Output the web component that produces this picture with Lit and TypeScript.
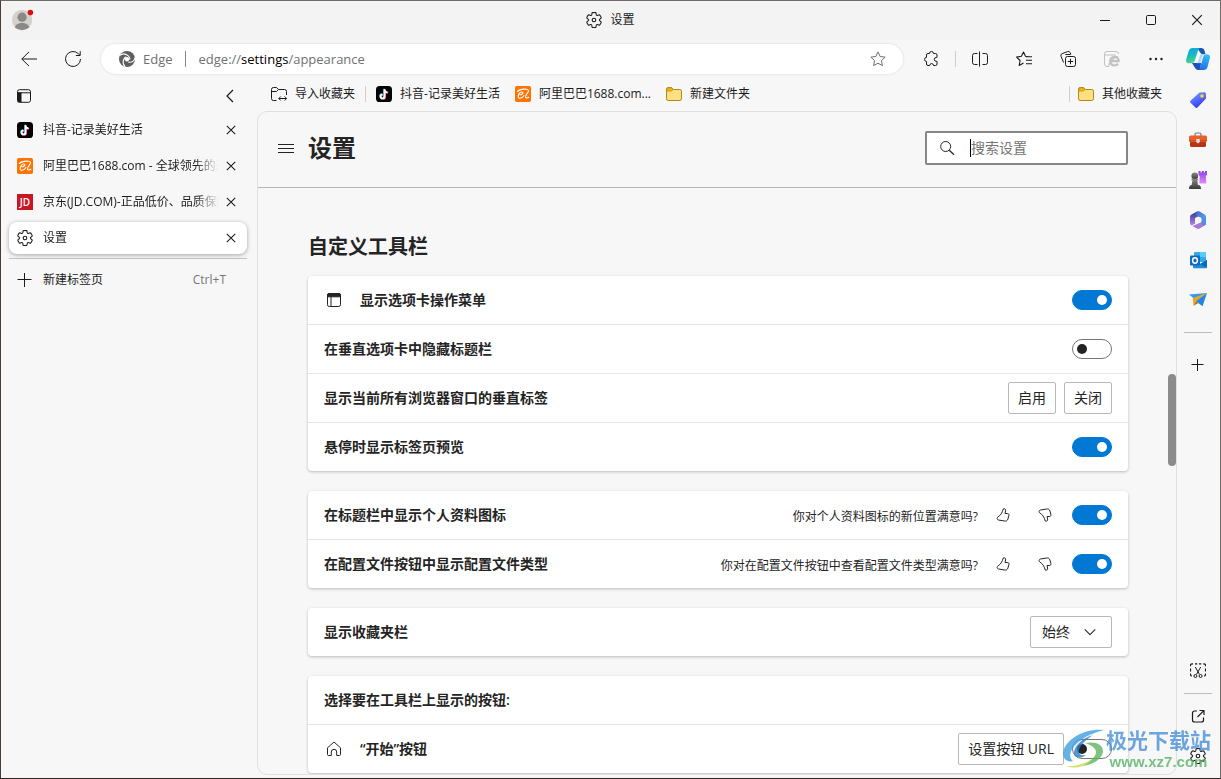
import { LitElement, html, svg, css, nothing, TemplateResult } from "lit";
import { customElement, property } from "lit/decorators.js";

const GEAR =
  "M1.91 7.38A8.5 8.5 0 0 1 3.7 4.3a.5.5 0 0 1 .54-.13l1.92.68a1 1 0 0 0 1.32-.76l.36-2a.5.5 0 0 1 .4-.4 8.53 8.53 0 0 1 3.55 0c.2.04.35.2.38.4l.37 2a1 1 0 0 0 1.32.76l1.92-.68a.5.5 0 0 1 .54.13 8.5 8.5 0 0 1 1.78 3.08c.06.2 0 .4-.15.54l-1.56 1.32a1 1 0 0 0 0 1.52l1.56 1.32a.5.5 0 0 1 .15.54 8.5 8.5 0 0 1-1.78 3.08.5.5 0 0 1-.54.13l-1.92-.68a1 1 0 0 0-1.32.76l-.37 2a.5.5 0 0 1-.38.4 8.53 8.53 0 0 1-3.56 0 .5.5 0 0 1-.39-.4l-.36-2a1 1 0 0 0-1.32-.76l-1.92.68a.5.5 0 0 1-.54-.13 8.5 8.5 0 0 1-1.78-3.08.5.5 0 0 1 .15-.54l1.56-1.32a1 1 0 0 0 0-1.52L2.06 7.92a.5.5 0 0 1-.15-.54z";

const STAR = "M8 .9l2.15 4.6 5 .65-3.7 3.45.95 5L8 12.2l-4.4 2.4.95-5L.85 6.15l5-.65z";

const THUMB = "M8.300 1.900c1.600-.5 2.700.5 2.300 2l-.6 2.600h2.200c1.400 0 2 .8 1.700 2l-1 3.600c-.4 1.500-1.700 2.200-3.200 1.900L3.500 13c-.9-.2-1.500-.9-1.400-1.700.1-.7.4-1.100 1-1.500C5.500 8.300 7.200 6 8.300 1.900z";

const icons: Record<string, { box?: string; body: TemplateResult }> = {
  gear: { box: "1 1 18 18", body: svg`<path d=${GEAR} stroke-width="1.2"/><circle cx="10" cy="10" r="2" stroke-width="1.2"/>` },
  back: { body: svg`<path d="M16 8H.8M8 .9L.8 8 8 15.100"/>` },
  refresh: { body: svg`<path d="M15.500 8a7.500 7.500 0 1 1-2.300-5.400L15 4.300M15.200.2v4.300h-4.300"/>` },
  minimize: { body: svg`<path d="M3 8.500h10"/>` },
  maximize: { body: svg`<rect x="3.500" y="3.500" width="9" height="9" rx="1.200"/>` },
  close: { body: svg`<path d="M3.200 3.200l9.600 9.600M12.800 3.200l-9.600 9.600" stroke-width="1.200"/>` },
  star: { body: svg`<path d=${STAR}/>` },
  puzzle: { body: svg`<path d="M6.500 2.500a2 2 0 0 1 4 0h2a1.500 1.500 0 0 1 1.500 1.500v2.500h-.8a1.900 1.900 0 0 0 0 3.800h.8v2.700a1.500 1.500 0 0 1-1.500 1.500h-2a1.900 1.900 0 0 0-3.800 0H5A1.500 1.500 0 0 1 3.500 13v-2.600a2 2 0 0 1 0-4V4A1.500 1.500 0 0 1 5 2.500z"/>` },
  split: { body: svg`<path d="M5.500 2.500H2.500a2 2 0 0 0-2 2v7a2 2 0 0 0 2 2h3M10.500 2.500h3a2 2 0 0 1 2 2v7a2 2 0 0 1-2 2h-3M7.500.5v15"/>` },
  favorites: { body: svg`<path d="M12.500 5.700l-3-.4L7.500 1 5.400 5.300.6 6.100l3.500 3.400-.9 4.900 4.300-2.300M10 5.700h6M10 9.200h6M10 12.700h6" stroke-width="1.100"/>` },
  collections: { body: svg`<rect x="5.500" y="5.500" width="10" height="10" rx="2"/><path d="M10.500 7.800v5.400M7.800 10.500h5.400M3.600 11.500L1 5.200a2 2 0 0 1 1.200-2.600l5.400-2a2 2 0 0 1 2.600 1.200l.7 1.500M5.400 3.500h5.200"/>` },
  ie: { body: svg`<path d="M5 15.500H3a2.500 2.500 0 0 1-2.500-2.500V3A2.500 2.500 0 0 1 3 .5h9A2.500 2.500 0 0 1 14.500 3M.5 4H12"/><path d="M6.200 10.200h8.600a4.300 4.300 0 1 0-.8 2.500" stroke-width="2.200"/><path d="M5 15c-1-2 4-8.500 9-9.500" stroke-width="1.200"/>` },
  more: { body: svg`<g fill="currentColor" stroke="none"><circle cx="2.500" cy="8" r="1.200"/><circle cx="8" cy="8" r="1.200"/><circle cx="13.500" cy="8" r="1.200"/></g>` },
  edge: { body: svg`<circle cx="8" cy="8" r="8" fill="#5e5e5e" stroke="none"/><g stroke="#fff" stroke-width="1.100"><path d="M.5 4.500C3 2.500 6.500 2.500 9 4.600c1.300 1.100 1.900 2.200 2.100 3.800"/><path d="M16 6.500c-.6 3.500-3 5.300-6.700 4.600"/><path d="M6.300 16C4 13.500 3.500 10.300 5.300 7.400c.5-.8 1-1.300 1.900-1.600"/></g><circle cx="8" cy="8.300" r="2.200" fill="#fff" stroke="none"/>` },
  panel: { body: svg`<rect x="1.500" y="1.700" width="13" height="12.600" rx="2"/><path d="M1.500 4.800h13"/><path d="M1.500 4.500h4v9.800H3a1.500 1.500 0 0 1-1.500-1.500z" fill="currentColor" stroke="none"/>` },
  window: { body: svg`<rect x="1.500" y="1.500" width="13" height="13" rx="1.800"/><path d="M1.500 4.800V3a1.500 1.500 0 0 1 1.500-1.500h10A1.500 1.500 0 0 1 14.500 3v1.800z" fill="currentColor"/><path d="M5 4v10.500"/>` },
  chevronLeft: { body: svg`<path d="M11 2L5 8l6 6" stroke-width="1.200"/>` },
  chevronDown: { body: svg`<path d="M2 5l6 6 6-6" stroke-width="1.200"/>` },
  plus: { body: svg`<path d="M7.500 1v14M.5 7.500h14"/>` },
  plusSmall: { body: svg`<path d="M7.500 2v12M1.500 7.500h12"/>` },
  importFolder: { body: svg`<path d="M5.500 14.500H2.500a2 2 0 0 1-2-2v-9a2 2 0 0 1 2-2h3l2 2h6a2 2 0 0 1 2 2V9M.5 5.500h5l2-2M8 12.500h7.500M9.800 10.500l-2 2 2 2M13.700 10.500l2 2-2 2"/>` },
  folder: { body: svg`<path d="M.5 4.500V3.200A1.700 1.700 0 0 1 2.200 1.500h3.300l2 2h6.300a1.700 1.700 0 0 1 1.700 1.700v7.600a1.700 1.700 0 0 1-1.700 1.700H2.200a1.700 1.700 0 0 1-1.700-1.700z" fill="#ffdf80" stroke="#b08a16"/><path d="M.9 5V3.200A1.300 1.300 0 0 1 2.200 1.900h3.200l1.700 1.700L5.500 5z" fill="#f2b90f" stroke="#b08a16" stroke-width=".7"/>` },
  douyin: { body: svg`<rect width="16" height="16" rx="3.600" fill="#000" stroke="none"/><g fill="none" stroke-width="1.700"><path d="M8.100 2.800v7.300a2 2 0 1 1-2-2M8.100 3.500c.2 1.500 1.400 2.500 3 2.600" stroke="#25f4ee"/><path d="M9.100 3.600v7.300a2 2 0 1 1-2-2M9.100 4.300c.2 1.500 1.400 2.500 3 2.600" stroke="#fe2c55"/><path d="M8.600 3.200v7.300a2 2 0 1 1-2-2M8.600 3.900c.2 1.500 1.400 2.500 3 2.600" stroke="#fff"/></g>` },
  alibaba: { body: svg`<rect width="16" height="16" rx="1.800" fill="#ff7300" stroke="none"/><path d="M2 5.800c2.300-2.400 5.800-3 9.500-2.500 1.800.3 2.600 1.100 1.500 2.800-1.200 1.900-2.700 3.600-2.500 5 .2 1.300 2.200 1 3.600-.1M4.600 8.700c1.700.3 3.400-.7 3.300-1.900-.1-1.200-2.100-1.200-3.500.5-1.300 1.600-2 4.300-.1 4.800 1.800.4 3.800-1.100 5-2.900" stroke="#fff" stroke-width="1.100"/>` },
  search: { body: svg`<circle cx="6.700" cy="6.500" r="5"/><path d="M10.300 10.200l4.800 4.600" stroke-width="1.200"/>` },
  menu: { body: svg`<path d="M0 4.500h16M0 8.500h16M0 12.500h16"/>` },
  thumbUp: { body: svg`<path d=${THUMB}/>` },
  thumbDown: { body: svg`<path d=${THUMB} transform="translate(0 16) scale(1 -1)"/>` },
  home: { body: svg`<path d="M1.500 6.800L8 1l6.500 5.800v6.700a1 1 0 0 1-1 1h-2.800V11a2.700 2.700 0 0 0-5.400 0v3.500H2.500a1 1 0 0 1-1-1z"/>` },
  screenshot: { body: svg`<path d="M3 .8H2A1.500 1.500 0 0 0 .5 2.300v1M.5 5.500v3M.5 10.500v1A1.500 1.500 0 0 0 2 13M5 .8h2.300M9 .8h2.300M13.200.8H14a1.500 1.500 0 0 1 1.500 1.500v1M15.500 5.500v3M15.500 10.500v1A1.500 1.500 0 0 1 14 13" stroke-width="1.200"/><path d="M5.300 4l4.200 7.400M10.700 4l-4.200 7.400"/><circle cx="5.400" cy="13" r="1.500"/><circle cx="10.600" cy="13" r="1.500"/>` },
  external: { body: svg`<path d="M7 3H4.500a2 2 0 0 0-2 2v7a2 2 0 0 0 2 2h7a2 2 0 0 0 2-2V9.500M9.500 2.500h4.500V7M13.800 2.700L7.500 9" stroke-width="1.200"/>` },
  copilot: { box: "0 0 24 24", body: svg`<defs>
      <linearGradient id="ca" x1="0" y1="0" x2=".3" y2="1"><stop offset="0" stop-color="#16a3e0"/><stop offset=".5" stop-color="#12b8c8"/><stop offset="1" stop-color="#4fd58a"/></linearGradient>
      <linearGradient id="cb" x1=".6" y1="0" x2=".4" y2="1"><stop offset="0" stop-color="#35bdf8"/><stop offset="1" stop-color="#1f6fe5"/></linearGradient></defs>
      <g stroke="none"><path d="M10 1h5c2.200 0 3 1 3.600 3l.9 3.200h-4L11 1z" fill="#1559a8"/>
      <path d="M6 16l2.500 4c.8 1.600 1.800 3 3.800 3h2L15 16z" fill="#1d4fc4"/>
      <path d="M6.700 1h7.800c-1.300 0-2 1-2.500 2.500L9 13c-.7 2.200-1.500 3.300-3.700 3.300H3.200C.8 16.300-.4 14.700.2 12.200L2.700 4C3.300 2 4.600 1 6.700 1z" fill="url(#ca)"/>
      <path d="M17.600 23h-5.900c1.200 0 1.900-.8 2.400-2.300L17 10.500c.7-2.200 1.500-3.300 3.500-3.300h.4c2.500 0 3.600 1.600 2.900 4L21.500 20c-.6 2-1.800 3-3.900 3z" fill="url(#cb)"/>
      <path d="M12.500 7.200h5c-1 .8-1.500 2-2 3.500L14 16H9c.7-.7 1-1.700 1.400-2.800z" fill="#f4fbff"/>
      <path d="M14.300 7.200h3.500c-1 .8-1.600 2-2 3.500L13.800 17H9.500c1.700-.4 2.400-1.600 2.900-3.200z" fill="#2a8fe8" opacity=".35"/></g>` },
  tag: { body: svg`<defs><linearGradient id="tg" x1="0" y1="0" x2=".5" y2="1"><stop offset="0" stop-color="#6ab0ff"/><stop offset="1" stop-color="#3a35f0"/></linearGradient></defs>
      <path d="M9.500.4l4.800-.2c1 0 1.600.6 1.600 1.500l.1 4.800-8.500 9c-.6.600-1.500.6-2.100 0L.5 10.700c-.6-.6-.6-1.400 0-2z" fill="url(#tg)" stroke="none"/><circle cx="12" cy="4" r="1.800" fill="#ffd76a" stroke="#d99a3a" stroke-width=".6"/>` },
  toolbox: { box: "0 0 18 16", body: svg`<g stroke="none"><path d="M6 4V2.500C6 1.600 6.600 1 7.500 1h3c.9 0 1.500.6 1.500 1.500V4" stroke="#777" stroke-width="1.200"/><rect x="0" y="3.500" width="18" height="6" rx="1.500" fill="#e8612c"/><path d="M1 9.500h16v4a1.500 1.500 0 0 1-1.500 1.500h-13A1.500 1.500 0 0 1 1 13.500z" fill="#b93412"/><path d="M0 8h18v1.500H0z" fill="#d14a1a"/><path d="M7.200 7h3.600v3L9 11.500 7.200 10z" fill="#ddd"/></g>` },
  games: { box: "0 0 18 18", body: svg`<defs><linearGradient id="gp" x1="0" y1="0" x2="0" y2="1"><stop offset="0" stop-color="#8b3df0"/><stop offset="1" stop-color="#e08cf8"/></linearGradient><linearGradient id="gb" x1="0" y1="0" x2="0" y2="1"><stop offset="0" stop-color="#8a8a8a"/><stop offset="1" stop-color="#383838"/></linearGradient></defs>
      <g stroke="none"><path d="M9.500 0h2v1.500h1.300V0h2v1.500h1.200V0h2v3.800l-1.200 1.500.5 7.200h-7l.4-7.200-1.200-1.500z" fill="url(#gp)"/><circle cx="5.800" cy="5" r="3.400" fill="url(#gb)"/><path d="M2.500 7.800h6.600v1.400H8.300l.7 4.800h1c1.200.5 2 1.800 2 4H0c0-2.200.8-3.500 2-4h.7l.7-4.800h-.9z" fill="url(#gb)"/></g>` },
  m365: { box: "0 0 18 18", body: svg`<defs><linearGradient id="ma" x1="0" y1="0" x2="1" y2="1"><stop offset="0" stop-color="#3f63c8"/><stop offset="1" stop-color="#5fb7f2"/></linearGradient><linearGradient id="mb" x1="0" y1="0" x2="0" y2="1"><stop offset="0" stop-color="#35319f"/><stop offset="1" stop-color="#b18be0"/></linearGradient></defs>
      <g stroke="none"><path d="M8 .5L2.500 3.600C1.500 4.200 1 5 1 6v6c0 1.200.7 2 1.600 2.500L6 12.700V7.300L11.500 4z" fill="url(#mb)"/><path d="M8 .5c.9-.5 1.800-.4 2.600 0l5 3c1 .6 1.400 1.300 1.400 2.400v5L12.600 9V7.300L7.500 4.500C6.500 3.500 6.500 1.500 8 .5z" fill="url(#ma)"/><path d="M17 7v5c0 1.100-.4 1.900-1.400 2.500l-5 3c-.9.500-1.800.5-2.700 0l-5.300-3c1.300.5 2.500.2 3.400-.4L12.600 11V8.500z" fill="#a678d8"/><path d="M12.600 7.300L17 6v6c0 1.100-.5 2-1.500 2.500L12.600 13z" fill="#4f8fe4"/></g><circle cx="9.300" cy="9" r="3" fill="#f7f7f7" stroke="none"/>` },
  outlook: { box: "0 0 18 18", body: svg`<g stroke="none"><rect x="5" y="1" width="12" height="10" rx="1" fill="#35a8ec"/><path d="M11 1h6v5h-6z" fill="#58cdf8"/><path d="M4 9l7 4 7-4v7a1.300 1.300 0 0 1-1.300 1.300H5.300A1.300 1.300 0 0 1 4 16z" fill="#1a8bdd"/><path d="M18 9v7.500L11 13z" fill="#1267b8"/><rect x="1" y="4.500" width="10" height="10" rx="1" fill="#0f6cbd"/></g><ellipse cx="6" cy="9.500" rx="2.400" ry="2.700" stroke="#fff" stroke-width="1.500"/>` },
  plane: { box: "0 0 18 14", body: svg`<g stroke="none"><path d="M0 1.500L18 0 6.500 6.800z" fill="#2f9bf2"/><path d="M3.800 5L18 0 7 9 4.500 12.800z" fill="#f2a51c"/><path d="M18 0L7 8.300l6.500 5z" fill="#2186e8"/><path d="M7 8.500L4.500 12.800 9.500 10z" fill="#b8701a"/></g>` },
};

/** Draws one glyph out of the icon table. */
@customElement("ui-icon")
export class UiIcon extends LitElement {
  @property() name = "";
  @property({ type: Number }) size = 16;

  static styles = css`
    :host { display: inline-flex; flex: none; }
    svg { display: block; }
  `;

  render() {
    const icon = icons[this.name];
    if (!icon) return nothing;
    return html`<svg width=${this.size} height=${this.size} viewBox=${icon.box ?? "0 0 16 16"} fill="none"
      stroke="currentColor" stroke-linejoin="round" aria-hidden="true">${icon.body}</svg>`;
  }
}

const base = css`
  * { box-sizing: border-box; }
  button, input, select {
    font: inherit;
    color: inherit;
    background: none;
    border: 0;
    padding: 0;
    margin: 0;
  }
  a { color: inherit; text-decoration: none; }
`;

interface Tab { icon: string; title: string; active?: boolean }

@customElement("vertical-tabs")
export class VerticalTabs extends LitElement {
  tabs: Tab[] = [
    { icon: "douyin", title: "抖音-记录美好生活" },
    { icon: "alibaba", title: "阿里巴巴1688.com - 全球领先的采" },
    { icon: "jd", title: "京东(JD.COM)-正品低价、品质保障" },
    { icon: "gear", title: "设置", active: true },
  ];

  static styles = [base, css`
    :host { display: block; width: 256px; flex: none; padding: 0 10px 0 8px; }
    .head { display: flex; align-items: center; justify-content: space-between; height: 36px; padding: 0 9px 0 7px; }
    .head button, .close { display: flex; }
    .list { display: flex; flex-direction: column; gap: 4px; }
    .tab { display: flex; align-items: center; height: 32px; padding: 0 9px 0 8px; border-radius: 8px; }
    .tab.active { background: #fff; box-shadow: 0 1px 4px rgba(0, 0, 0, 0.35); }
    .title {
      flex: 1; min-width: 0; margin-left: 10px; line-height: 20px; overflow: hidden; white-space: nowrap;
      mask-image: linear-gradient(to right, #000 calc(100% - 24px), transparent);
    }
    .close { margin-left: 5px; }
    .jd {
      width: 16px; height: 16px; background: #c81623; color: #fff;
      font: 600 10px/17px "Open Sans", sans-serif; text-align: center;
    }
    .rule { height: 1px; background: #c4c4c4; margin-top: 4px; }
    .new { display: flex; align-items: center; width: 100%; height: 32px; margin-top: 5px; padding: 0 21px 0 8px; }
    .new span { margin-left: 10px; }
    .new kbd { margin-left: auto; font: inherit; color: #767676; }
  `];

  render() {
    return html`
      <div class="head">
        <button aria-label="标签页操作菜单"><ui-icon name="panel"></ui-icon></button>
        <button aria-label="折叠窗格"><ui-icon name="chevronLeft"></ui-icon></button>
      </div>
      <div class="list">
        ${this.tabs.map((t) => html`
          <div class="tab ${t.active ? "active" : ""}">
            ${t.icon === "jd" ? html`<span class="jd">JD</span>` : html`<ui-icon name=${t.icon}></ui-icon>`}
            <span class="title">${t.title}</span>
            <button class="close" aria-label="关闭标签页"><ui-icon name="close" size="14"></ui-icon></button>
          </div>`)}
      </div>
      <div class="rule"></div>
      <button class="new"><ui-icon name="plus"></ui-icon><span>新建标签页</span><kbd>Ctrl+T</kbd></button>
    `;
  }
}

@customElement("side-bar")
export class SideBar extends LitElement {
  static styles = [base, css`
    :host { display: flex; flex-direction: column; align-items: center; width: 43px; flex: none; padding: 2px 2px 2px 0; }
    button { display: flex; align-items: center; justify-content: center; width: 40px; height: 40px; }
    .rule { width: 28px; height: 1px; background: #bdbdbd; }
    .rule.upper { margin: 12px 0; }
    .rule.lower { margin: 2px 0; }
    .space { flex: 1; }
  `];

  render() {
    const apps: [string, string, number][] = [
      ["tag", "购物", 16], ["toolbox", "工具", 18], ["games", "游戏", 18],
      ["m365", "Microsoft 365", 18], ["outlook", "Outlook", 18], ["plane", "Drop", 18],
    ];
    return html`
      ${apps.map(([n, label, s]) => html`<button aria-label=${label}><ui-icon name=${n} size=${s}></ui-icon></button>`)}
      <div class="rule upper"></div>
      <button aria-label="自定义"><ui-icon name="plusSmall"></ui-icon></button>
      <div class="space"></div>
      <button aria-label="屏幕截图"><ui-icon name="screenshot"></ui-icon></button>
      <div class="rule lower"></div>
      <button aria-label="在新窗口打开"><ui-icon name="external"></ui-icon></button>
      <button aria-label="设置"><ui-icon name="gear"></ui-icon></button>
    `;
  }
}

@customElement("settings-page")
export class SettingsPage extends LitElement {
  static styles = [base, css`
    :host {
      display: flex; flex-direction: column; flex: 1; min-height: 0; position: relative; overflow: hidden;
      margin-bottom: 3px; border: 1px solid #e0e0e0; border-radius: 10px; color: #242424; font-size: 14px; line-height: 20px;
    }
    header {
      display: flex; align-items: center; flex: none; height: 76px; padding: 0 48px 3px 20px;
      border-bottom: 1px solid #b3b7b5;
    }
    header button { display: flex; }
    h1 { margin: 0 0 0 14px; font-size: 24px; line-height: 32px; font-weight: 700; }
    .search {
      display: flex; align-items: center; width: 203px; height: 34px; margin-left: auto;
      border: 2px solid #868686; border-radius: 2px; background: #fff;
    }
    .search label { display: flex; margin: 0 15px 0 12px; }
    .caret { width: 1px; height: 18px; background: #000; }
    .search input { flex: 1; min-width: 0; outline: 0; }
    .search input::placeholder { color: #757575; opacity: 1; }
    .content { flex: 1; min-height: 0; overflow: hidden; padding: 45px 48px 0 50px; }
    h2 { margin: 0 0 15px; font-size: 20px; line-height: 28px; font-weight: 700; }
    .card { background: #fff; border-radius: 4px; margin-bottom: 20px; box-shadow: 0 1px 3px rgba(0, 0, 0, 0.25); }
    .row { display: flex; align-items: center; height: 48px; padding: 0 16px; }
    .row + .row { height: 49px; border-top: 1px solid #e5e5e5; }
    .row > ui-icon { margin: 0 18px 0 2px; }
    .name { font-weight: 600; }
    .actions { display: flex; align-items: center; gap: 8px; margin-left: auto; }
    .feedback { display: flex; align-items: center; font-size: 12px; margin-right: -2px; }
    .feedback span { margin-right: 4px; padding-top: 4px; }
    .feedback button { display: flex; justify-content: center; width: 42px; }
    .btn { height: 32px; padding: 0 9px; border: 1px solid #b8b8b8; border-radius: 2px; background: #fff; white-space: nowrap; }
    .switch {
      appearance: none; display: flex; align-items: center; width: 40px; height: 20px; padding: 0 4px;
      border: 1px solid #767676; border-radius: 10px; background: #fff;
    }
    .switch::before { content: ""; width: 10px; height: 10px; border-radius: 50%; background: #242424; }
    .switch:checked { justify-content: flex-end; background: #0078d4; border-color: #0078d4; }
    .switch:checked::before { background: #fff; }
    .drop { display: grid; align-items: center; }
    .drop > * { grid-area: 1 / 1; }
    .drop select {
      appearance: none; width: 82px; height: 32px; padding-left: 11px; border: 1px solid #b8b8b8;
      border-radius: 2px; background: #fff;
    }
    .drop ui-icon { justify-self: end; margin-right: 15px; pointer-events: none; }
    .thumb { position: absolute; right: 0; top: 262px; width: 8px; height: 92px; border-radius: 4px; background: #8b8b8b; }
  `];

  private toggle(id: string, on: boolean) {
    return html`<input class="switch" type="checkbox" role="switch" id=${id} ?checked=${on} />`;
  }

  private feedback(text: string) {
    return html`<div class="feedback"><span>${text}</span>
      <button aria-label="满意"><ui-icon name="thumbUp"></ui-icon></button>
      <button aria-label="不满意"><ui-icon name="thumbDown"></ui-icon></button></div>`;
  }

  render() {
    return html`
      <header>
        <button aria-label="设置菜单"><ui-icon name="menu"></ui-icon></button>
        <h1>设置</h1>
        <div class="search">
          <label for="q" aria-label="搜索设置"><ui-icon name="search"></ui-icon></label>
          <span class="caret"></span>
          <input id="q" type="text" placeholder="搜索设置" />
        </div>
      </header>
      <div class="content">
        <h2>自定义工具栏</h2>
        <section class="card">
          <div class="row"><ui-icon name="window"></ui-icon><label class="name" for="s1">显示选项卡操作菜单</label>
            <div class="actions">${this.toggle("s1", true)}</div></div>
          <div class="row"><label class="name" for="s2">在垂直选项卡中隐藏标题栏</label>
            <div class="actions">${this.toggle("s2", false)}</div></div>
          <div class="row"><span class="name">显示当前所有浏览器窗口的垂直标签</span>
            <div class="actions"><button class="btn">启用</button><button class="btn">关闭</button></div></div>
          <div class="row"><label class="name" for="s3">悬停时显示标签页预览</label>
            <div class="actions">${this.toggle("s3", true)}</div></div>
        </section>
        <section class="card">
          <div class="row"><label class="name" for="s4">在标题栏中显示个人资料图标</label>
            <div class="actions">${this.feedback("你对个人资料图标的新位置满意吗?")}${this.toggle("s4", true)}</div></div>
          <div class="row"><label class="name" for="s5">在配置文件按钮中显示配置文件类型</label>
            <div class="actions">${this.feedback("你对在配置文件按钮中查看配置文件类型满意吗?")}${this.toggle("s5", true)}</div></div>
        </section>
        <section class="card">
          <div class="row"><label class="name" for="fav">显示收藏夹栏</label>
            <div class="actions drop"><select id="fav"><option>始终</option></select><ui-icon name="chevronDown" size="14"></ui-icon></div></div>
        </section>
        <section class="card">
          <div class="row"><span class="name">选择要在工具栏上显示的按钮:</span></div>
          <div class="row"><ui-icon name="home"></ui-icon><label class="name" for="s6">“开始”按钮</label>
            <div class="actions"><button class="btn">设置按钮 URL</button>${this.toggle("s6", false)}</div></div>
        </section>
      </div>
      <div class="thumb"></div>
    `;
  }
}

@customElement("app-root")
export class AppRoot extends LitElement {
  static styles = [base, css`
    :host {
      display: flex; flex-direction: column; box-sizing: border-box; height: 100vh; position: relative; overflow: hidden;
      border: 1px solid #6e6a6a; border-left-color: #4a3a38; border-bottom-color: #33211f;
      background: #f7f7f7; color: #1b1b1b;
      font: 12px/16px "Open Sans", "Noto Sans CJK SC", sans-serif;
    }
    .titlebar { display: grid; grid-template-columns: 1fr auto 1fr; align-items: center; flex: none; height: 39px; padding-bottom: 1px; background: #f3f3f3; }
    .avatar { display: flex; width: 24px; margin-left: 10px; }
    .title { display: flex; align-items: center; gap: 8px; }
    .controls { display: flex; justify-content: flex-end; }
    .controls button { display: flex; align-items: center; justify-content: center; width: 46px; height: 38px; }
    .toolbar { display: flex; align-items: center; flex: none; height: 38px; padding: 0 2px 0 6px; }
    .tool { display: flex; align-items: center; justify-content: center; width: 44px; height: 36px; }
    .tool.copilot { width: 40px; }
    .tool:disabled { color: #c2c2c2; }
    .address {
      display: flex; align-items: center; flex: 1; height: 30px; margin: 0 6px; padding: 0 17px 0 18px;
      border-radius: 15px; background: #fff; box-shadow: 0 0 3px rgba(0, 0, 0, 0.12); color: #707070; font-size: 13px;
    }
    .address .site { margin-left: 8px; }
    .address .rule { width: 1px; height: 16px; margin: 0 13px 0 12px; background: #8a8a8a; }
    .address b { font-weight: 400; color: #000; }
    .address button { display: flex; margin-left: auto; }
    .sep { width: 1px; height: 16px; margin: 0 2px; background: #cfcfcf; }
    .body { display: flex; flex: 1; min-height: 0; }
    .main { display: flex; flex-direction: column; flex: 1; min-width: 0; }
    .bookmarks { display: flex; align-items: center; gap: 15px; flex: none; height: 33px; padding: 0 15px 2px 14px; white-space: nowrap; }
    .bookmarks a { display: flex; align-items: center; gap: 8px; }
    .bookmarks .group { display: flex; align-items: center; gap: 8px; }
    .bookmarks .group.first { gap: 10px; }
    .bookmarks .group.last { margin-left: auto; }
    .bar { width: 1px; height: 16px; background: #d0d0d0; }
    .watermark { position: absolute; right: 9px; bottom: 7px; display: flex; align-items: center; opacity: 0.8; pointer-events: none; }
    .watermark .words { display: flex; flex-direction: column; align-items: center; margin-left: 1px; }
    .watermark .cn { font-size: 21px; line-height: 26px; font-weight: 700; color: #4a90d9; }
    .watermark .url { font: 700 15px/18px "Liberation Sans", sans-serif; color: #58b368; }
  `];

  private tool(name: string, label: string, size = 16, disabled = false) {
    return html`<button class="tool" aria-label=${label} ?disabled=${disabled}><ui-icon name=${name} size=${size}></ui-icon></button>`;
  }

  render() {
    return html`
      <div class="titlebar">
        <button class="avatar" aria-label="个人资料">
          <svg width="26" height="24" viewBox="0 0 26 24">
            <defs><clipPath id="av"><circle cx="12" cy="12" r="11"/></clipPath></defs>
            <circle cx="12" cy="12" r="11" fill="#d3d1ce"/>
            <g clip-path="url(#av)" fill="#8b8986"><circle cx="12" cy="9" r="5"/><ellipse cx="12" cy="21" rx="8" ry="6"/></g>
            <circle cx="21" cy="4" r="3" fill="#e00b0b"/>
          </svg>
        </button>
        <div class="title"><ui-icon name="gear"></ui-icon><span>设置</span></div>
        <div class="controls">
          <button aria-label="最小化"><ui-icon name="minimize"></ui-icon></button>
          <button aria-label="最大化"><ui-icon name="maximize"></ui-icon></button>
          <button aria-label="关闭"><ui-icon name="close"></ui-icon></button>
        </div>
      </div>
      <div class="toolbar">
        ${this.tool("back", "返回")}
        ${this.tool("refresh", "刷新")}
        <div class="address">
          <ui-icon name="edge"></ui-icon><span class="site">Edge</span><span class="rule"></span>
          <span>edge://<b>settings</b>/appearance</span>
          <button aria-label="收藏此页面"><ui-icon name="star"></ui-icon></button>
        </div>
        ${this.tool("puzzle", "扩展")}
        <span class="sep"></span>
        ${this.tool("split", "分屏")}
        ${this.tool("favorites", "收藏夹")}
        ${this.tool("collections", "集锦")}
        ${this.tool("ie", "IE 模式", 16, true)}
        ${this.tool("more", "更多")}
        <button class="tool copilot" aria-label="Copilot"><ui-icon name="copilot" size="24"></ui-icon></button>
      </div>
      <div class="body">
        <vertical-tabs></vertical-tabs>
        <div class="main">
          <nav class="bookmarks">
            <div class="group first">
              <a href="#"><ui-icon name="importFolder"></ui-icon>导入收藏夹</a><span class="bar"></span>
              <a href="#"><ui-icon name="douyin"></ui-icon>抖音-记录美好生活</a>
            </div>
            <a href="#"><ui-icon name="alibaba"></ui-icon>阿里巴巴1688.com...</a>
            <a href="#"><ui-icon name="folder"></ui-icon>新建文件夹</a>
            <div class="group last"><span class="bar"></span><a href="#"><ui-icon name="folder"></ui-icon>其他收藏夹</a></div>
          </nav>
          <settings-page></settings-page>
        </div>
        <side-bar></side-bar>
      </div>
      <div class="watermark">
        <svg width="42" height="40" viewBox="0 0 42 40">
          <path d="M41 1C24-1 6 8 1 20c-3 8 2 14 9 12C4 28 8 18 18 11 25 6 33 3 41 1z" fill="#3f9fe0"/>
          <path d="M30 6C19 9 10 18 11 25c1 4 7 5 12 1-5 1-8-1-7-5 2-6 8-11 14-15z" fill="#2c7cc8"/>
          <path d="M22 14c10-2 18 1 18 8 0 9-14 16-26 15 10-2 19-8 19-14 0-4-5-7-11-9z" fill="#5fb562"/>
          <path d="M3 37c8 1 20-2 27-8-6 8-16 12-27 8z" fill="#c8d94a"/>
        </svg>
        <div class="words"><span class="cn">极光下载站</span><span class="url">www.xz7.com</span></div>
      </div>
    `;
  }
}
